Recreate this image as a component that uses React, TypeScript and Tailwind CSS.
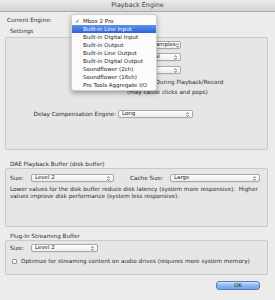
import React from "react";

const Arrows = () => (
  <svg width="3" height="5" viewBox="0 0 3 5" className="shrink-0">
    <path d="M0.3 2 L1.5 0.6 L2.7 2" fill="none" stroke="#444" strokeWidth="0.7" />
    <path d="M0.3 3 L1.5 4.4 L2.7 3" fill="none" stroke="#444" strokeWidth="0.7" />
  </svg>
);

const Select = ({ w, label }: { w: string; label?: string }) => (
  <div
    className={`${w} h-[8px] rounded-[2px] border border-[#a8a8a8] bg-gradient-to-b from-[#ffffff] to-[#ededed] flex items-center justify-between pl-[3px] pr-[3px] text-[5.5px] text-[#222] shadow-[0_0.5px_0_rgba(0,0,0,0.08)] overflow-hidden whitespace-nowrap`}
  >
    <span className="leading-none">{label}</span>
    <Arrows />
  </div>
);

const Check = () => (
  <div className="w-[5px] h-[5px] rounded-[1px] border border-[#9c9c9c] bg-gradient-to-b from-white to-[#eaeaea] shrink-0" />
);

const items = [
  "Built-in Line Input",
  "Built-in Digital Input",
  "Built-in Output",
  "Built-in Line Output",
  "Built-in Digital Output",
  "Soundflower (2ch)",
  "Soundflower (16ch)",
  "Pro Tools Aggregate I/O",
];

export default function App() {
  return (
    <div
      className="relative w-[275px] h-[300px] overflow-hidden bg-[#ececec] text-[#2a2a2a] text-[5.7px] whitespace-nowrap"
      style={{ fontFamily: '"DejaVu Sans", Verdana, sans-serif' }}
    >
      {/* title bar */}
      <div className="h-[12px] flex items-center justify-center bg-gradient-to-b from-[#ebebeb] to-[#d3d3d3] border-b border-[#a9a9a9] text-[6.4px] text-[#444]">
        <span>Playback Engine</span>
      </div>

      <div className="flex flex-col pl-[5px] pr-[7px]">
        <div className="mt-[4px] h-[8px] flex items-center pl-[2px]">Current Engine:</div>
        <div className="h-[8px] mt-[3px] flex items-center pl-[5px]">Settings</div>

        {/* Settings box */}
        <div className="mt-[2px] h-[113px] border border-[#c9c9c9] bg-[#e6e6e6] rounded-[2px] flex flex-col">
          <div className="mt-[3px] h-[8px] flex items-center pl-[130px]">
            <Select w="w-[45px]" label="128 Samples" />
          </div>
          <div className="mt-[4px] h-[8px] flex items-center pl-[130px]">
            <Select w="w-[45px]" label="Normal" />
          </div>
          <div className="mt-[5px] h-[8px] flex items-center pl-[130px]">
            <Select w="w-[45px]" label="1" />
          </div>
          <div className="mt-[4px] h-[8px] flex items-center pl-[104px] gap-[2px]">
            <Check />
            <span>Ignore Errors During Playback/Record</span>
          </div>
          <div className="mt-[2px] h-[8px] flex items-center pl-[121px]">(may cause clicks and pops)</div>
          <div className="mt-[14px] h-[8px] flex items-center">
            <span className="w-[112px] text-right pr-[2px]">Delay Compensation Engine:</span>
            <Select w="w-[75px]" label="Long" />
          </div>
        </div>

        <div className="mt-[10px] h-[8px] flex items-center pl-[5px]">DAE Playback Buffer (disk buffer)</div>
        {/* DAE box */}
        <div className="h-[59px] border border-[#c9c9c9] bg-[#e6e6e6] rounded-[2px] flex flex-col pl-[4px]">
          <div className="mt-[5px] h-[8px] flex items-center">
            <span className="w-[21px]">Size:</span>
            <Select w="w-[83px]" label="Level 2" />
            <span className="ml-[16px] w-[40px]">Cache Size:</span>
            <Select w="w-[90px]" label="Large" />
          </div>
          <div className="mt-[4px] leading-[7px]">
            Lower values for the disk buffer reduce disk latency (system more responsive).&nbsp; Higher
            <br />
            values improve disk performance (system less responsive).
          </div>
        </div>

        <div className="mt-[5px] h-[8px] flex items-center pl-[5px]">Plug-In Streaming Buffer</div>
        {/* Plug-in box */}
        <div className="h-[35px] border border-[#c9c9c9] bg-[#e6e6e6] rounded-[2px] flex flex-col pl-[4px]">
          <div className="mt-[3px] h-[8px] flex items-center">
            <span className="w-[21px]">Size:</span>
            <Select w="w-[67px]" label="Level 2" />
          </div>
          <div className="mt-[5px] h-[8px] flex items-center gap-[4px] pl-[2px]">
            <Check />
            <span>Optimize for streaming content on audio drives (requires more system memory)</span>
          </div>
        </div>

        <div className="mt-[6px] flex justify-end pr-[8px]">
          <div className="w-[44px] h-[9px] rounded-[3px] border border-[#5a7fb8] bg-gradient-to-b from-[#cfe3fb] via-[#8db8ef] to-[#6ea3e8] flex items-center justify-center text-[5.5px] text-[#1a1a1a]">
            OK
          </div>
        </div>
      </div>

      {/* dropdown menu */}
      <div className="absolute left-[71px] top-[14px] w-[86px] pt-[2px] pb-[1px] bg-[#fbfbfb] rounded-[3px] shadow-[0_2px_5px_rgba(0,0,0,0.35)] border border-[#d0d0d0] text-[5.5px] text-[#1e1e1e]">
        <div className="h-[8px] flex items-center">
          <span className="w-[11px] text-center">✓</span>
          <span>Mbox 2 Pro</span>
        </div>
        {items.map((it, i) => (
          <div
            key={it}
            className={`h-[8px] flex items-center pl-[11px] ${
              i === 0 ? "bg-gradient-to-b from-[#5f93ea] to-[#2c62d8] text-white" : ""
            }`}
          >
            {it}
          </div>
        ))}
      </div>
    </div>
  );
}
